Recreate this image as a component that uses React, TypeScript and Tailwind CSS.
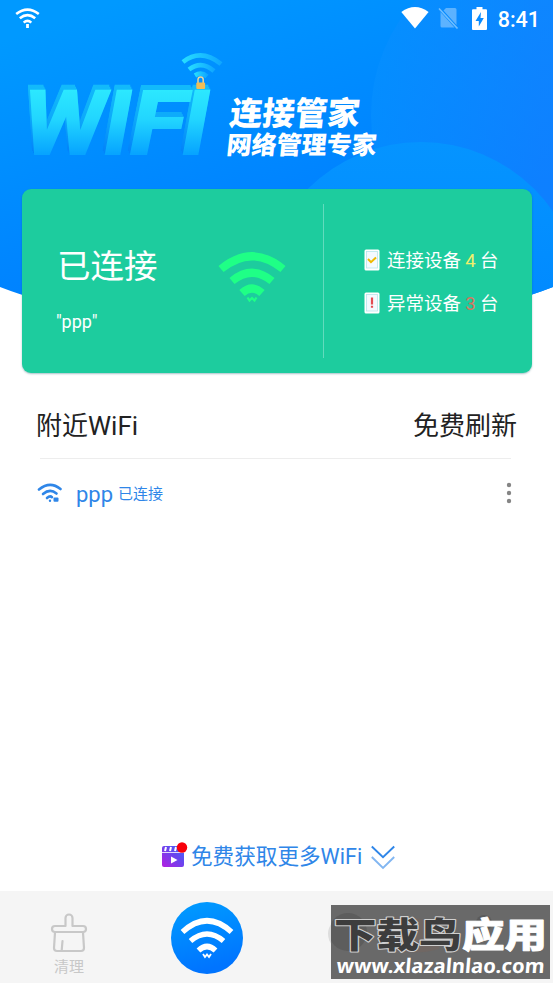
import type { ReactNode } from "react";
import clsx from "clsx";

function StatusBar() {
  return (
    <div className="flex h-9 items-center justify-between pl-[15px] pr-[13px]">
      <svg width="25" height="22" viewBox="0 0 25 22" fill="none" stroke="#fff" strokeWidth="2.6">
        <path d="M1.2 7Q12.5 -1.8 23.8 7" />
        <path d="M4.8 11.3Q12.5 5 20.2 11.3" />
        <path d="M8.7 15.6Q12.5 12.2 16.3 15.6" />
        <path d="M12.5 17v4" strokeWidth="2.8" />
      </svg>
      <div className="flex items-center">
        <svg width="28" height="22" viewBox="0 0 28 22">
          <path d="M.3 5Q14-4.8 27.6 5L14 21.5z" fill="#fff" />
        </svg>
        <svg width="21" height="22" viewBox="0 0 21 22" className="ml-[9px]">
          <path d="M8 1h9a1.5 1.5 0 0 1 1.500 1.500v15.500L5.500 3.500zM2.500 5l14 15.500H4a1.500 1.500 0 0 1-1.500-1.500z" fill="#fff" opacity=".34" />
          <path d="M1 1.500l18.500 20" stroke="#6fbeff" strokeWidth="1.600" />
        </svg>
        <svg width="15" height="23" viewBox="0 0 15 23" className="ml-[13px]">
          <path d="M4.500 0h6v2.300H14a1 1 0 0 1 1 1V22a1 1 0 0 1-1 1H1a1 1 0 0 1-1-1V3.300a1 1 0 0 1 1-1h3.500z" fill="#fff" />
          <path d="M9 5L3.500 14h3.300v5.500L11.800 11H8.500z" fill="#0a8cff" />
        </svg>
        <span className="ml-[11px] pt-[3px] text-[21.5px] font-medium leading-[33px] text-white">8:41</span>
      </div>
    </div>
  );
}

const LETTERS = [
  { char: "W", x: 23, width: 82 },
  { char: "I", x: 104, width: 27 },
  { char: "F", x: 130, width: 56 },
  { char: "I", x: 182, width: 27 },
];

function Logo() {
  return (
    <svg width="228" height="153" viewBox="0 0 228 153" className="shrink-0">
      <defs>
        <linearGradient id="face" gradientUnits="userSpaceOnUse" x1="0" y1="54" x2="0" y2="118">
          <stop offset="0" stopColor="#2ce8ff" />
          <stop offset=".45" stopColor="#22d6ff" />
          <stop offset="1" stopColor="#07a4ff" />
        </linearGradient>
        <linearGradient id="wave" x1="0" y1="0" x2="1" y2="0">
          <stop offset="0" stopColor="#26dcff" />
          <stop offset="1" stopColor="#0fa7ff" />
        </linearGradient>
        {/* pushes a darker copy of the letters up and to the left */}
        <filter id="extrude" filterUnits="userSpaceOnUse" x="0" y="20" width="228" height="110" colorInterpolationFilters="sRGB">
          <feColorMatrix in="SourceGraphic" values=".4 0 0 0 0  0 .8 0 0 0  0 0 .98 0 0  0 0 0 1 0" result="dark" />
          <feOffset in="dark" dx="-.5" dy="-1" result="d1" />
          <feOffset in="dark" dx="-1" dy="-2" result="d2" />
          <feOffset in="dark" dx="-1.5" dy="-3" result="d3" />
          <feOffset in="dark" dx="-2" dy="-4" result="d4" />
          <feOffset in="dark" dx="-2.5" dy="-5" result="d5" />
          <feMerge>
            <feMergeNode in="d5" />
            <feMergeNode in="d4" />
            <feMergeNode in="d3" />
            <feMergeNode in="d2" />
            <feMergeNode in="d1" />
            <feMergeNode in="SourceGraphic" />
          </feMerge>
        </filter>
      </defs>
      <g filter="url(#extrude)">
        {LETTERS.map((l, i) => (
          <text
            key={i}
            x={l.x}
            y="117.500"
            textLength={l.width}
            lengthAdjust="spacingAndGlyphs"
            fill="url(#face)"
            stroke="url(#face)"
            strokeWidth="1.800"
            fontFamily="Roboto, sans-serif"
            fontSize="88"
            fontWeight="700"
            fontStyle="italic"
          >
            {l.char}
          </text>
        ))}
      </g>
      <g fill="none" stroke="url(#wave)" strokeWidth="4.600">
        <path d="M183 26Q201 12 221 28" />
        <path d="M189 33.500Q201.500 24 214 35" />
        <path d="M195 39.500Q201.500 35.500 207 40.500" />
      </g>
      <path d="M198 47v-3.500a2.600 2.600 0 0 1 5.200 0V47" fill="none" stroke="#e8d6a0" strokeWidth="1.500" />
      <rect x="196.300" y="46.500" width="8.800" height="6.500" rx="1" fill="#efbd55" />
    </svg>
  );
}

function HeaderBackground() {
  return (
    <svg width="553" height="330" viewBox="0 0 553 330" className="absolute left-0 top-0">
      <defs>
        <linearGradient id="sky" gradientUnits="userSpaceOnUse" x1="120" y1="0" x2="220" y2="290">
          <stop offset="0" stopColor="#0099ff" />
          <stop offset="1" stopColor="#007dff" />
        </linearGradient>
        <linearGradient id="orbRight" x1="0" y1="0" x2="1" y2="0">
          <stop offset="0" stopColor="#0790ff" />
          <stop offset=".5" stopColor="#1782ff" />
        </linearGradient>
        <linearGradient id="orbLow" x1="0" y1="0" x2="0" y2="1">
          <stop offset="0" stopColor="#0594ff" />
          <stop offset=".6" stopColor="#0088ff" />
        </linearGradient>
        <clipPath id="curve">
          <path d="M0 0H553V287Q530 296 500 304H53Q23 296 0 287z" />
        </clipPath>
      </defs>
      <g clipPath="url(#curve)">
        <rect width="553" height="330" fill="url(#sky)" />
        <circle cx="541" cy="115" r="170" fill="url(#orbRight)" opacity=".6" />
        <circle cx="421" cy="302" r="160" fill="url(#orbLow)" />
      </g>
    </svg>
  );
}

function DeviceRow({ icon, label, count, countClass }: { icon: ReactNode; label: string; count: number; countClass: string }) {
  return (
    <div className="flex h-[43px] items-center text-[18.5px] text-white">
      <svg width="16" height="22" viewBox="0 0 16 22" className="mb-[3px]">
        <rect x=".5" y=".5" width="15" height="21" rx="1.500" fill="#fff" />
        <rect x="2.500" y="2.500" width="11" height="16.500" fill="#f4faff" stroke="#b6e5ec" strokeWidth=".8" />
        {icon}
      </svg>
      <span className="ml-[7px]">{label}</span>
      <span className={clsx("w-[19px] text-center", countClass)}>{count}</span>
      <span>台</span>
    </div>
  );
}

function StatusCard() {
  return (
    <div className="ml-[22px] mr-[21px] flex h-[184px] rounded-[9px] bg-[#1dcc9e] shadow-[0_1px_2px_rgba(0,80,100,0.35)]">
      <div className="flex w-[301px] items-center justify-between pl-[35px] pr-[37px]">
        <div className="pt-[15px] text-white">
          <div className="text-[33.5px] leading-[50px]">已连接</div>
          <div className="-ml-px mt-[16px] text-[18px] leading-7">"ppp"</div>
        </div>
        <svg width="68" height="52" viewBox="0 0 68 52" fill="none" stroke="#1fff86" strokeWidth="8" className="mb-[7px]">
          <path d="M3 17Q34-8.500 65 17" />
          <path d="M14 29Q34 12.500 54 29" />
          <path d="M24 41Q34 32 44 41" />
          <path d="M29.500 45.500l2 3 2.500-2.500 2.500 2.500 2-3" strokeWidth="2.200" />
        </svg>
      </div>
      <div className="my-[15px] w-px bg-[#62dbbd]" />
      <div className="flex flex-col pl-10 pt-[51px]">
        <DeviceRow
          label="连接设备"
          count={4}
          countClass="text-[#efef6b]"
          icon={<path d="M4 10l3 3.200L12 8.500" fill="none" stroke="#efb900" strokeWidth="2" />}
        />
        <DeviceRow
          label="异常设备"
          count={3}
          countClass="text-[#d8755f]"
          icon={<path d="M8 5.500v7M8 13.700v2" stroke="#e34d53" strokeWidth="2.200" />}
        />
      </div>
    </div>
  );
}

function NearbyList() {
  return (
    <div className="px-[36px]">
      <div className="flex items-center justify-between pt-[31px] text-[26px] leading-[44px] text-[#222]">
        <span>附近WiFi</span>
        <span>免费刷新</span>
      </div>
      <div className="ml-[4px] mr-[6px] mt-[10px] h-px bg-[#ededed]" />
      <div className="flex h-[70px] items-center text-[#2f86e8]">
        <svg width="25" height="20" viewBox="0 0 25 20" fill="none" stroke="#2f86e8" strokeWidth="2.600" strokeLinecap="round" className="-mt-0.5 ml-px">
          <path d="M2 6.500Q13-2.500 23.500 6" />
          <path d="M6 11Q13 5 19.500 10.500" />
          <path d="M10 15Q13 12.300 15 14.200" />
          <circle cx="13" cy="17.700" r="1.200" fill="#2f86e8" stroke="none" />
          <rect x="16.500" y="14.500" width="5" height="4.200" rx="1" fill="#2f86e8" stroke="none" />
        </svg>
        <span className="ml-[14px] text-[22px]">ppp</span>
        <span className="ml-[5px] text-[15px]">已连接</span>
        <svg width="6" height="22" viewBox="0 0 6 22" fill="#858585" className="-mt-0.5 ml-auto mr-[5px]">
          <circle cx="3" cy="3" r="2.200" />
          <circle cx="3" cy="11" r="2.200" />
          <circle cx="3" cy="19" r="2.200" />
        </svg>
      </div>
    </div>
  );
}

function MoreWifi() {
  return (
    <div className="flex h-[68px] items-center pl-[162px] text-[#2f86e8]">
      <svg width="26" height="27" viewBox="0 0 26 27" className="-mt-1">
        <defs>
          <linearGradient id="clip" x1="0" y1="1" x2="1" y2="0">
            <stop offset="0" stopColor="#b51ee0" />
            <stop offset=".6" stopColor="#6547ef" />
            <stop offset="1" stopColor="#426bff" />
          </linearGradient>
        </defs>
        <rect x="0" y="4" width="22" height="21" rx="2" fill="url(#clip)" />
        <path d="M3 9l1-4M8 9l1-4M13 9l1-4M18 9l1-4" stroke="#fff" strokeWidth="2" />
        <path d="M0 10.500h22" stroke="#fff" strokeWidth=".8" />
        <path d="M9 14.500v7l6.500-3.500z" fill="#fff" />
        <circle cx="20" cy="5.500" r="5.200" fill="#f8000b" />
      </svg>
      <span className="ml-[3px] text-[21.6px]">免费获取更多WiFi</span>
      <svg width="24" height="25" viewBox="0 0 24 25" fill="none" stroke="#2f86e8" strokeWidth="1.900" className="ml-[9px]">
        <path d="M.8 1.500L12 12.300 23.200 1.500" />
        <path d="M.8 12L12 23 23.200 12" opacity=".6" />
      </svg>
    </div>
  );
}

function Watermark() {
  return (
    <div className="absolute left-[331px] top-[14px] h-[74px] w-[219px] bg-[#696969]">
      <svg width="219" height="74" viewBox="0 0 219 74">
        <circle cx="17" cy="27" r="19" fill="#5d5d5d" />
        <path d="M50 15q20-8 58 4v25q-28 8-60-2z" fill="#7b6559" opacity=".4" />
        <circle cx="153" cy="18" r="8" fill="#5a5a5a" />
        <g fontFamily="'Noto Sans CJK SC', sans-serif" fontSize="42.5" fontWeight="900" strokeLinejoin="round" transform="scale(1 .82)">
          <text x="3" y="52" fill="#3d3d3d" stroke="#cfcfcf" strokeWidth="2.6" paintOrder="stroke">下载鸟</text>
          <text x="131" y="52" fill="#fff" stroke="#fff" strokeWidth="1">应用</text>
        </g>
        <text
          x="11"
          y="68"
          textLength="208"
          lengthAdjust="spacingAndGlyphs"
          fontFamily="'Noto Sans', sans-serif"
          fontSize="20"
          fontWeight="700"
          fill="#fff"
          transform="skewX(-5)"
        >
          www.xlazalnlao.com
        </text>
      </svg>
    </div>
  );
}

function BottomNav() {
  return (
    <div className="relative flex h-[92px] bg-[#f5f5f5]">
      <div className="flex w-[138px] flex-col items-center pt-[22px] text-[#c8c8c8]">
        <svg width="38" height="40" viewBox="0 0 38 40" fill="none" stroke="#c8c8c8" strokeWidth="2.200" strokeLinejoin="round" strokeLinecap="round">
          <path d="M15.500 13V5a3.500 3.500 0 0 1 7 0v8H33a3 3 0 0 1 0 6H5a3 3 0 0 1 0-6z" />
          <path d="M5 19.500L4 35q0 3 3 3h24q3 0 3-3L33 19.500M12.500 28l-.8 9.500" />
        </svg>
        <span className="mt-[4px] text-[15px] leading-5">清理</span>
      </div>
      <svg width="72" height="72" viewBox="0 0 72 72" className="ml-[33px] mt-[11px]">
        <defs>
          <linearGradient id="tab" x1="0" y1="0" x2=".25" y2="1">
            <stop offset="0" stopColor="#009dff" />
            <stop offset="1" stopColor="#0074ff" />
          </linearGradient>
        </defs>
        <circle cx="36" cy="36" r="36" fill="url(#tab)" />
        <g fill="none" stroke="#fff" strokeWidth="5.500">
          <path d="M11.500 30Q36 7.500 60.500 30" />
          <path d="M19.500 39Q36 25 52.500 39" />
          <path d="M27.500 48.500Q36 40.500 44.500 48.500" />
          <path d="M32 52l2 3 2-2.500 2 2.500 2-3" strokeWidth="1.800" />
        </g>
      </svg>
      <div className="ml-[85px] mt-[26px] h-[34px] w-[34px] rounded-full bg-[#dddddd]" />
      <Watermark />
    </div>
  );
}

export default function App() {
  return (
    <div className="relative flex h-[983px] w-[553px] flex-col overflow-hidden bg-white font-['Roboto','Noto_Sans_CJK_SC',sans-serif]">
      <HeaderBackground />
      <div className="relative flex flex-1 flex-col">
        <StatusBar />
        <div className="flex h-[153px]">
          <Logo />
          <div className="-skew-x-6 pt-[58px] font-black text-white">
            <div className="ml-[2px] text-[32.5px] leading-10">连接管家</div>
            <div className="ml-[2px] text-[25px] leading-6">网络管理专家</div>
          </div>
        </div>
        <StatusCard />
        <NearbyList />
        <div className="mt-auto">
          <MoreWifi />
          <BottomNav />
        </div>
      </div>
    </div>
  );
}
